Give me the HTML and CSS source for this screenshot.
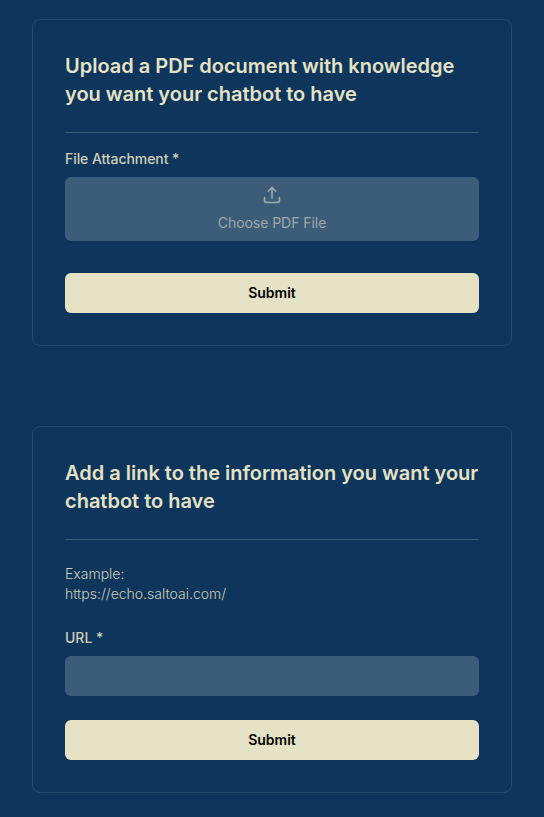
FILE: index.html
```html
<!DOCTYPE html>
<html lang="en">
<head>
<meta charset="utf-8">
<title>Chatbot knowledge</title>
<link rel="stylesheet" href="styles.css">
</head>
<body>
<main class="page">
  <form class="card">
    <h2 class="title">Upload a PDF document with knowledge you want your chatbot to have</h2>
    <hr class="divider">
    <span class="label label-file">File Attachment *</span>
    <button type="button" class="dropzone">
      <svg class="icon" viewBox="0 0 24 24" fill="none" stroke="currentColor" stroke-width="2" stroke-linecap="round" stroke-linejoin="round"><path d="M3 15v3a3 3 0 0 0 3 3h12a3 3 0 0 0 3-3v-3M16.5 7.5 12 3 7.5 7.5M12 3v12.5"/></svg>
      <span>Choose PDF File</span>
    </button>
    <button type="button" class="submit submit-file">Submit</button>
  </form>
  <form class="card">
    <h2 class="title">Add a link to the information you want your chatbot to have</h2>
    <hr class="divider">
    <p class="example">Example:<br>https://echo.saltoai.com/</p>
    <label class="label" for="url">URL *</label>
    <input class="input" id="url" type="text">
    <button type="button" class="submit submit-url">Submit</button>
  </form>
</main>
</body>
</html>
```
FILE: styles.css
```css
* { box-sizing: border-box; }
body {
  margin: 0;
  background: #0e355b;
  color: #e6e2c5;
  font-family: Inter, sans-serif;
  font-size: 14px;
  line-height: 20px;
}
button, input { font: inherit; border: 0; border-radius: 6px; }
.page {
  display: flex;
  flex-direction: column;
  gap: 80px;
  padding: 19px 32px 24px;
}
.card {
  display: flex;
  flex-direction: column;
  padding: 32px;
  border: 1px solid #264a6c;
  border-radius: 8px;
}
.title {
  margin: 0;
  font-size: 20px;
  line-height: 28px;
  font-weight: 600;
  letter-spacing: -.01px;
}
.divider {
  width: 100%;
  height: 1px;
  margin: 24px 0 16px;
  border: 0;
  background: #3a5d7a;
}
.label { font-weight: 500; color: #d0cfb9; }
.label-file { letter-spacing: -.07px; }
.dropzone {
  display: flex;
  flex-direction: column;
  align-items: center;
  height: 64px;
  margin-top: 8px;
  padding: 8px 0;
  gap: 8px;
  background: #3b5d7a;
  color: #a1a8a6;
  letter-spacing: -.05px;
}
.icon { width: 20px; height: 20px; }
.submit {
  height: 40px;
  background: #e6e2c5;
  color: #000;
  font-weight: 600;
}
.submit-file { margin-top: 32px; }
.submit-url { margin-top: 24px; }
.example { margin: 8px 0 24px; font-weight: 300; color: #d0cfb9; }
.input {
  width: 100%;
  height: 40px;
  margin-top: 8px;
  background: #3b5d7a;
}
```
